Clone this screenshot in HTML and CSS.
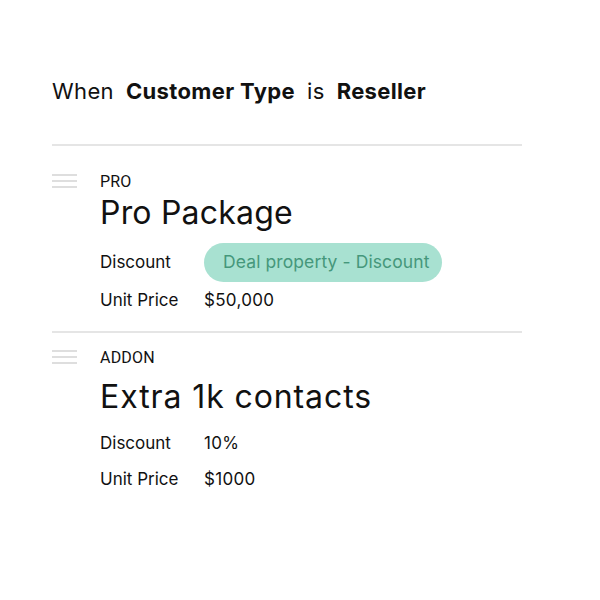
FILE: index.html
```html
<!DOCTYPE html>
<html>
<head>
<meta charset="utf-8">
<link rel="stylesheet" href="styles.css">
</head>
<body>
<div class="page">
  <h1 class="rule-head"><span>When</span><strong>Customer Type</strong><span>is</span><strong>Reseller</strong></h1>
  <div class="list">
    <div class="item">
      <div class="handle"><i></i><i></i><i></i></div>
      <div class="body">
        <div class="kind">PRO</div>
        <div class="name">Pro Package</div>
        <div class="row tall"><span class="label">Discount</span><span class="pill">Deal property - Discount</span></div>
        <div class="row"><span class="label">Unit Price</span><span class="value">$50,000</span></div>
      </div>
    </div>
    <div class="item addon">
      <div class="handle"><i></i><i></i><i></i></div>
      <div class="body">
        <div class="kind">ADDON</div>
        <div class="name">Extra 1k contacts</div>
        <div class="row"><span class="label">Discount</span><span class="value">10%</span></div>
        <div class="row"><span class="label">Unit Price</span><span class="value">$1000</span></div>
      </div>
    </div>
  </div>
</div>
</body>
</html>
```
FILE: styles.css
```css
* { box-sizing: border-box; }
body {
  margin: 0;
  background: #fff;
  color: #111;
  font-family: Inter, "Open Sans", sans-serif;
}
.page {
  width: 522px;
  padding: 75px 0 0 52px;
}
.rule-head {
  margin: 0;
  display: flex;
  gap: 12px;
  font-size: 22px;
  letter-spacing: 0.35px;
  font-weight: 400;
  line-height: 32px;
  padding-bottom: 37px;
  border-bottom: 2px solid #e5e5e5;
}
.rule-head strong { font-weight: 700; }
.list { padding-top: 11px; }
.item {
  display: flex;
  padding-top: 16px;
}
.item + .item { border-top: 2px solid #e5e5e5; }
.handle {
  width: 48px;
  flex: none;
  display: flex;
  flex-direction: column;
  gap: 4px;
  padding-top: 1px;
}
.handle i {
  display: block;
  width: 25px;
  height: 2px;
  background: #dedede;
}
.body { padding-bottom: 13px; }
.kind {
  font-family: Roboto, sans-serif;
  font-size: 16px;
  line-height: 18px;
  font-weight: 400;
  letter-spacing: 0.2px;
}
.name {
  font-size: 32px;
  line-height: 44px;
  margin-bottom: 7px;
  letter-spacing: 0.2px;
}
.addon .name {
  margin-top: 8px;
  margin-bottom: 6px;
  letter-spacing: 0.9px;
}
.row {
  display: flex;
  align-items: center;
  min-height: 36px;
  font-size: 17px;
}
.row.tall { min-height: 40px; }
.label { width: 104px; flex: none; }
.value { letter-spacing: 0.3px; }
.pill {
  background: #a8e1d1;
  color: #45977b;
  border-radius: 20px;
  height: 39px;
  line-height: 38px;
  font-size: 17.5px;
  letter-spacing: 0.1px;
  padding: 0 13px 0 19px;
}
```
